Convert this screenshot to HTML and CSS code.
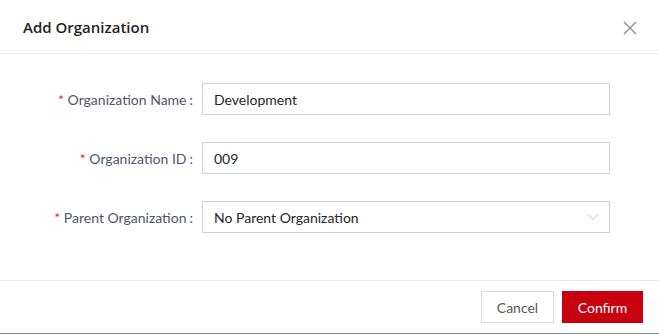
FILE: index.html
```html
<!DOCTYPE html>
<html lang="en">
<head>
    <meta charset="UTF-8">
    <meta name="viewport" content="width=device-width, initial-scale=1.0">
    <title>Add Organization</title>
    <link rel="stylesheet" href="styles.css">
</head>
<body>
    <div class="dialog">
        <div class="dialog-header">
            <h1>Add Organization</h1>
            <span class="close">
                <svg width="14" height="14" viewBox="0 0 14 14"><path d="M1 1 L13 13 M13 1 L1 13" stroke="#8c8c8c" stroke-width="1.3" fill="none"/></svg>
            </span>
        </div>

        <form class="dialog-body">
            <div class="row">
                <label><span class="req">*</span> Organization Name<span class="colon">:</span></label>
                <div class="field">Development</div>
            </div>
            <div class="row">
                <label><span class="req">*</span> Organization ID<span class="colon">:</span></label>
                <div class="field">009</div>
            </div>
            <div class="row">
                <label><span class="req">*</span> Parent Organization<span class="colon">:</span></label>
                <div class="field select">
                    <span>No Parent Organization</span>
                    <svg width="12" height="8" viewBox="0 0 12 8"><path d="M1 1.5 L6 6.5 L11 1.5" stroke="#c4c4c4" stroke-width="1" fill="none"/></svg>
                </div>
            </div>
        </form>

        <div class="dialog-footer">
            <button class="btn">Cancel</button>
            <button class="btn primary">Confirm</button>
        </div>
    </div>
</body>
</html>
```

FILE: styles.css
```css
* {
    margin: 0;
    padding: 0;
    box-sizing: border-box;
}
body {
    background: #fff;
    font-family: 'Lato', 'Noto Sans', sans-serif;
    font-size: 14px;
    color: #262626;
}
.dialog {
    width: 659px;
    height: 334px;
    display: flex;
    flex-direction: column;
    border-bottom: 1px solid #8a8a8a;
}
.dialog-header {
    height: 54px;
    display: flex;
    align-items: center;
    justify-content: space-between;
    padding: 0 22px 0 23px;
    border-bottom: 1px solid #e8e8e8;
}
.dialog-header h1 {
    font-family: 'Open Sans', sans-serif;
    font-size: 15px;
    font-weight: 600;
    color: #1f1f1f;
}
.close {
    display: flex;
    margin-top: 2px;
}
.dialog-body {
    flex: 1;
    padding-top: 29px;
    display: flex;
    flex-direction: column;
    gap: 27px;
}
.row {
    display: flex;
    align-items: center;
}
.row label {
    width: 193px;
    text-align: right;
    color: #4f566b;
}
.req {
    color: #f5222d;
}
.colon {
    margin-left: 3px;
}
.field {
    margin-left: 9px;
    width: 408px;
    height: 32px;
    border: 1px solid #cfd0dd;
    padding: 0 11px;
    display: flex;
    align-items: center;
    color: #262626;
}
.select {
    justify-content: space-between;
    padding-right: 10px;
}
.dialog-footer {
    height: 53px;
    border-top: 1px solid #e8e8e8;
    display: flex;
    justify-content: flex-end;
    align-items: center;
    gap: 8px;
    padding-right: 16px;
}
.btn {
    height: 32px;
    width: 73px;
    border: 1px solid #d9d9d9;
    background: #fff;
    color: #595959;
    font-family: inherit;
    font-size: 14px;
}
.btn.primary {
    background: #c8000f;
    border-color: #c8000f;
    color: #fff;
    width: 81px;
}
```
